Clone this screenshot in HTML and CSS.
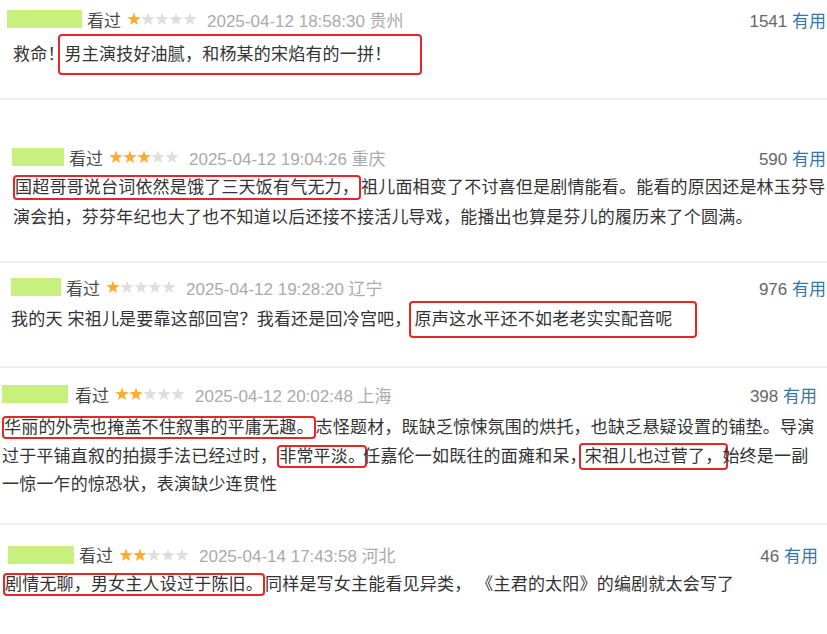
FILE: index.html
```html
<!DOCTYPE html>
<html>
<head>
  <title>短评</title>
  <meta charset="UTF-8">
  <link rel="stylesheet" href="styles.css">
</head>
<body>
  <svg class="sprite" width="0" height="0">
    <symbol id="star" viewBox="0 0 14 14">
      <polygon points="7,0.6 8.65,5.1 13.66,5.2 9.66,8.2 11.11,13 7,10.2 2.89,13 4.34,8.2 0.34,5.2 5.35,5.1"/>
    </symbol>
  </svg>

  <div class="review r1">
    <div class="meta">
      <div class="who">
        <span class="name"></span>
        <span class="watched">看过</span>
        <svg class="stars" width="70" height="14">
          <use href="#star" x="0" width="14" height="14" class="on"/>
          <use href="#star" x="14" width="14" height="14"/>
          <use href="#star" x="28" width="14" height="14"/>
          <use href="#star" x="42" width="14" height="14"/>
          <use href="#star" x="56" width="14" height="14"/>
        </svg>
        <span class="time">2025-04-12 18:58:30 贵州</span>
      </div>
      <div class="votes">1541 <a href="#">有用</a></div>
    </div>
    <p class="text">救命！<span class="mark">男主演技好油腻，和杨某的宋焰有的一拼！</span></p>
  </div>

  <div class="review r2">
    <div class="meta">
      <div class="who">
        <span class="name"></span>
        <span class="watched">看过</span>
        <svg class="stars" width="70" height="14">
          <use href="#star" x="0" width="14" height="14" class="on"/>
          <use href="#star" x="14" width="14" height="14" class="on"/>
          <use href="#star" x="28" width="14" height="14" class="on"/>
          <use href="#star" x="42" width="14" height="14"/>
          <use href="#star" x="56" width="14" height="14"/>
        </svg>
        <span class="time">2025-04-12 19:04:26 重庆</span>
      </div>
      <div class="votes">590 <a href="#">有用</a></div>
    </div>
    <p class="text"><span class="mark">国超哥哥说台词依然是饿了三天饭有气无力，</span>祖儿面相变了不讨喜但是剧情能看。能看的原因还是林玉芬导演会拍，芬芬年纪也大了也不知道以后还接不接活儿导戏，能播出也算是芬儿的履历来了个圆满。</p>
  </div>

  <div class="review r3">
    <div class="meta">
      <div class="who">
        <span class="name"></span>
        <span class="watched">看过</span>
        <svg class="stars" width="70" height="14">
          <use href="#star" x="0" width="14" height="14" class="on"/>
          <use href="#star" x="14" width="14" height="14"/>
          <use href="#star" x="28" width="14" height="14"/>
          <use href="#star" x="42" width="14" height="14"/>
          <use href="#star" x="56" width="14" height="14"/>
        </svg>
        <span class="time">2025-04-12 19:28:20 辽宁</span>
      </div>
      <div class="votes">976 <a href="#">有用</a></div>
    </div>
    <p class="text">我的天 宋祖儿是要靠这部回宫？我看还是回冷宫吧，<span class="mark">原声这水平还不如老老实实配音呢</span></p>
  </div>

  <div class="review r4">
    <div class="meta">
      <div class="who">
        <span class="name"></span>
        <span class="watched">看过</span>
        <svg class="stars" width="70" height="14">
          <use href="#star" x="0" width="14" height="14" class="on"/>
          <use href="#star" x="14" width="14" height="14" class="on"/>
          <use href="#star" x="28" width="14" height="14"/>
          <use href="#star" x="42" width="14" height="14"/>
          <use href="#star" x="56" width="14" height="14"/>
        </svg>
        <span class="time">2025-04-12 20:02:48 上海</span>
      </div>
      <div class="votes">398 <a href="#">有用</a></div>
    </div>
    <p class="text"><span class="mark">华丽的外壳也掩盖不住叙事的平庸无趣。</span>志怪题材，既缺乏惊悚氛围的烘托，也缺乏悬疑设置的铺垫。导演过于平铺直叙的拍摄手法已经过时，<span class="mark m2">非常平淡。</span>任嘉伦一如既往的面瘫和呆，<span class="mark m3">宋祖儿也过菅了，</span>始终是一副一惊一乍的惊恐状，表演缺少连贯性</p>
  </div>

  <div class="review r5">
    <div class="meta">
      <div class="who">
        <span class="name"></span>
        <span class="watched">看过</span>
        <svg class="stars" width="70" height="14">
          <use href="#star" x="0" width="14" height="14" class="on"/>
          <use href="#star" x="14" width="14" height="14" class="on"/>
          <use href="#star" x="28" width="14" height="14"/>
          <use href="#star" x="42" width="14" height="14"/>
          <use href="#star" x="56" width="14" height="14"/>
        </svg>
        <span class="time">2025-04-14 17:43:58 河北</span>
      </div>
      <div class="votes">46 <a href="#">有用</a></div>
    </div>
    <p class="text"><span class="mark">剧情无聊，男女主人设过于陈旧。</span>同样是写女主能看见异类，&nbsp;《主君的太阳》的编剧就太会写了</p>
  </div>
</body>
</html>
```

FILE: styles.css
```css
html,
body {
  margin: 0;
}

body {
  font-family: "Liberation Sans", "Noto Sans CJK SC", sans-serif;
  font-size: 17px;
  color: #333;
  background-color: #fff;
  height: 634px;
  overflow: hidden;
}

.sprite {
  display: block;
  height: 0;
}

.review {
  border-bottom: 2px solid #efefef;
}

.review:last-child {
  border-bottom: none;
}

.meta {
  display: flex;
  justify-content: space-between;
  align-items: center;
  height: 24px;
  white-space: nowrap;
}

.who {
  display: flex;
  align-items: center;
}

.name {
  display: block;
  height: 18px;
  margin-right: 5px;
  background-color: #c8f07e;
}

.watched {
  color: #494949;
  margin-right: 6px;
}

.stars {
  display: block;
  margin-right: 10px;
  fill: #dedede;
}

.stars .on {
  fill: #ffac2d;
}

.time {
  color: #aaa;
}

.votes {
  color: #666;
}

.votes a {
  color: #37a;
  text-decoration: none;
}

.text {
  margin: 0;
  line-height: 30px;
  letter-spacing: 0.2px;
}

.mark {
  border: 2px solid #e8262a;
  border-radius: 4px;
}

/* each review comes from a different screenshot, so offsets differ */
.r1 {
  padding: 7px 1px 28px 7px;
}

.r1 .name {
  width: 75px;
}

.r1 .text {
  margin-top: 9px;
  padding-left: 6px;
}

.r1 .mark {
  margin-left: -7px;
  padding: 9px 29px 9px 5px;
}

.r2 {
  padding: 45px 1px 28px 12px;
}

.r2 .name {
  width: 52px;
}

.r2 .text {
  margin-top: 4px;
  padding-left: 1px;
}

.r2 .mark {
  padding: 1px 0;
}

.r3 {
  padding: 12px 1px 31px 11px;
}

.r3 .name {
  width: 50px;
}

.r3 .text {
  margin-top: 6px;
}

.r3 .mark {
  margin-left: -3px;
  padding: 7px 22px 7px 4px;
}

.r4 {
  padding: 14px 10px 23px 2px;
}

.r4 .name {
  width: 66px;
  margin-right: 7px;
}

.r4 .text {
  margin-top: 8px;
  line-height: 28.5px;
}

.r4 .m2 {
  margin-right: -4px;
}

.r4 .m3 {
  margin: 0 -6px 0 -8px;
  padding: 2px 4px;
}

.r5 {
  padding: 18px 9px 0 3px;
}

.r5 .meta {
  padding-left: 5px;
}

.r5 .name {
  width: 66px;
}

.r5 .text {
  margin-top: 3px;
}
```
